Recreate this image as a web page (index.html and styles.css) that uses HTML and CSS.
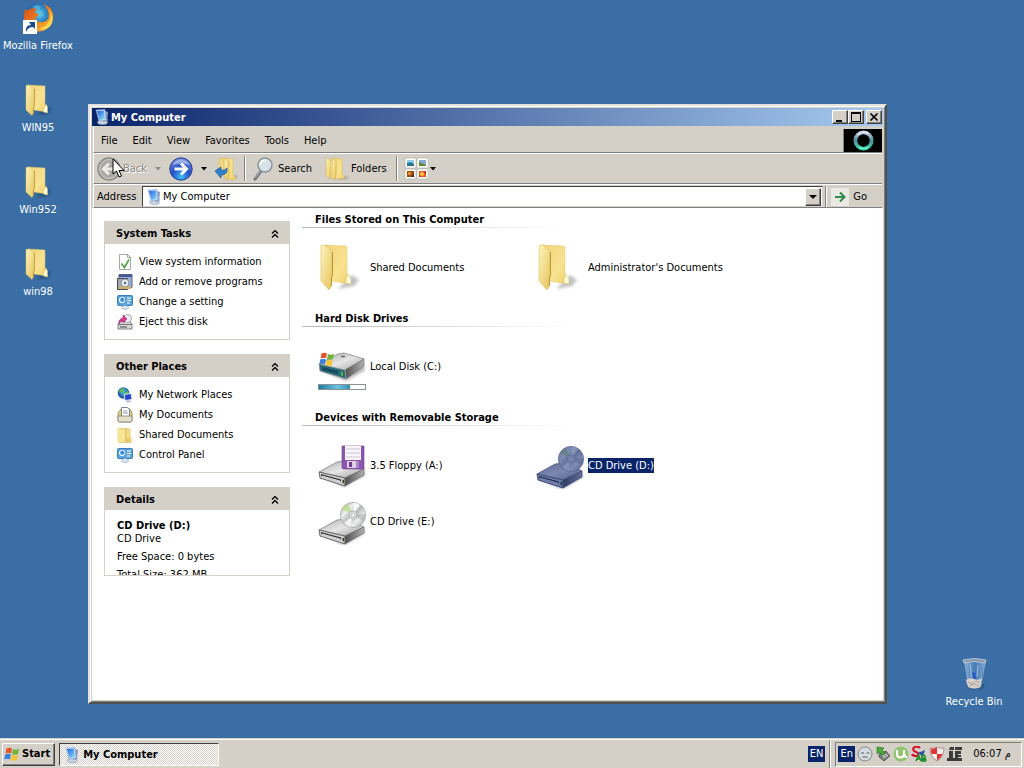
FILE: index.html
```
<!DOCTYPE html>
<html lang="en">
<head>
  <meta charset="UTF-8">
  <meta name="viewport" content="width=device-width, initial-scale=1.0">
  <title>My Computer</title>
  <link rel="stylesheet" href="styles.css">
</head>
<body>

  <!-- Shared icons -->
  <svg class="icon-defs" aria-hidden="true">
    <defs>
      <linearGradient id="gFlap" x1="0" y1="0" x2="1" y2="1">
        <stop offset="0" stop-color="#fdf5bd"/><stop offset="1" stop-color="#e6c45c"/>
      </linearGradient>
      <linearGradient id="gBack" x1="0" y1="0" x2="1" y2="1">
        <stop offset="0" stop-color="#f0d27a"/><stop offset=".6" stop-color="#f8e391"/><stop offset="1" stop-color="#f0cf68"/>
      </linearGradient>
      <linearGradient id="gTop" x1="0" y1="0" x2="1" y2="1">
        <stop offset="0" stop-color="#a8a8a8"/><stop offset=".5" stop-color="#e6e6e6"/><stop offset="1" stop-color="#9c9c9c"/>
      </linearGradient>
      <linearGradient id="gSide" x1="0" y1="0" x2="1" y2="0">
        <stop offset="0" stop-color="#505050"/><stop offset="1" stop-color="#b0b0b0"/>
      </linearGradient>
      <linearGradient id="gDisc" x1="0" y1="0" x2="1" y2="1">
        <stop offset="0" stop-color="#a0a6a4"/><stop offset=".3" stop-color="#eceeec"/><stop offset=".5" stop-color="#b4b9b7"/><stop offset=".7" stop-color="#eeeeee"/><stop offset="1" stop-color="#939795"/>
      </linearGradient>
      <linearGradient id="gBar" x1="0" y1="0" x2="1" y2="0">
        <stop offset="0" stop-color="#1e7ba4"/><stop offset=".6" stop-color="#6fc4de"/><stop offset="1" stop-color="#2f8fb4"/>
      </linearGradient>
      <linearGradient id="gScreen" x1="0" y1="0" x2="1" y2="1">
        <stop offset="0" stop-color="#1d62d8"/><stop offset="1" stop-color="#8fe0fb"/>
      </linearGradient>
      <linearGradient id="gRing" x1="0" y1="0" x2="0" y2="1">
        <stop offset="0" stop-color="#c3cce4"/><stop offset=".5" stop-color="#4d8e9c"/><stop offset="1" stop-color="#35d3a8"/>
      </linearGradient>
      <linearGradient id="gGlass" x1="0" y1="0" x2="1" y2="0">
        <stop offset="0" stop-color="#b9d3ec"/><stop offset=".5" stop-color="#4f83bd"/><stop offset="1" stop-color="#a8c6e4"/>
      </linearGradient>
      <radialGradient id="gBlue" cx=".5" cy=".85" r=".8">
        <stop offset="0" stop-color="#3fc0f8"/><stop offset=".5" stop-color="#2350c8"/><stop offset="1" stop-color="#6d86d8"/>
      </radialGradient>
      <radialGradient id="gGlobe" cx=".5" cy=".4" r=".6">
        <stop offset="0" stop-color="#4cc3ee"/><stop offset="1" stop-color="#143f8c"/>
      </radialGradient>
      <linearGradient id="gFox" x1="0" y1="0" x2="1" y2="1">
        <stop offset="0" stop-color="#d4451a"/><stop offset=".6" stop-color="#f08a1c"/><stop offset="1" stop-color="#fbd34a"/>
      </linearGradient>
      <filter id="selectedTint" color-interpolation-filters="sRGB">
        <feColorMatrix values=".5 0 0 0 .03  0 .5 0 0 .08  0 0 .5 0 .24  0 0 0 1 0"/>
      </filter>
      <filter id="soft"><feGaussianBlur stdDeviation="1.5"/></filter>
    </defs>

    <symbol id="folder" viewBox="0 0 48 48">
      <path d="M20 46L34 32l7 5-5 6z" fill="#777" opacity=".45" filter="url(#soft)"/>
      <path d="M7 2l21 1 1 1v33l3 2v2l-18-3z" fill="url(#gBack)" stroke="#e3c66c" stroke-width=".5"/>
      <path d="M30 31l3 5v5l-5-1v-4z" fill="#fffbe0" stroke="#d5bb60" stroke-width=".5"/>
      <path d="M3 2.500l4-.5 6 5 1 2v24l-1 3v8l-2 3-8-9z" fill="url(#gFlap)" stroke="#d9bf66" stroke-width=".6"/>
      <path d="M14.500 9v23l-1 3v8" fill="none" stroke="#bd9936" stroke-width="1"/>
    </symbol>

    <!-- Same folder, sitting in the middle of a desktop icon -->
    <symbol id="folder-desktop" viewBox="0 0 32 32">
      <path d="M14 31l10-9 5 3-4 5z" fill="#123" opacity=".4" filter="url(#soft)"/>
      <path d="M6 1l17 1v24l2 1v1l-13-2z" fill="url(#gBack)" stroke="#e3c66c" stroke-width=".5"/>
      <path d="M24 20l1.500 3v6l-4-1v-3z" fill="#fffbe0" stroke="#d5bb60" stroke-width=".5"/>
      <path d="M4 1.500L7 1l5 3.500v18l-1 2v5L10 31.500 4 26z" fill="url(#gFlap)" stroke="#d9bf66" stroke-width=".5"/>
      <path d="M12.500 5v17.500l-1 2v5" fill="none" stroke="#bd9936" stroke-width=".8"/>
    </symbol>

    <symbol id="monitor" viewBox="0 0 16 16">
      <path d="M3 12l6 3 4-2 1-3z" fill="#aeb9cf"/>
      <ellipse cx="8.500" cy="13.500" rx="5" ry="2" fill="#ccd5e4" stroke="#8793ae" stroke-width=".6"/>
      <path d="M11 2l3 1-1 9-4 1z" fill="#8698bd"/>
      <path d="M2 1l9-.5 1 10.500-7 1z" fill="#cfe2fa" stroke="#8ba7d6" stroke-width=".6"/>
      <path d="M3 2l7-.5.8 8.500-5.300 1z" fill="url(#gScreen)"/>
    </symbol>

    <symbol id="drive" viewBox="0 0 48 48">
      <path d="M4 37l22 10 21-12-2-5z" fill="#555" opacity=".45" filter="url(#soft)"/>
      <path d="M1 32l18-10 10-1 17 8-19 9z" fill="url(#gTop)" stroke="#858585" stroke-width=".8"/>
      <path d="M1 32l26 6v8L2 38z" fill="#d0d0d0" stroke="#5d5d5d" stroke-width=".9"/>
      <path d="M27 38l19-9v6L27 46z" fill="url(#gSide)" stroke="#6b6b6b" stroke-width=".7"/>
      <path d="M3 34l20 5.500v2L3 36z" fill="#333"/>
      <path d="M4 36l18 5" stroke="#fff" stroke-width=".8"/>
      <path d="M24.500 39.500l1.500.4v3.600l-1.500-.4z" fill="#2f4a22"/>
    </symbol>

    <symbol id="disc" viewBox="0 0 48 48">
      <circle cx="35" cy="18" r="12.600" fill="url(#gDisc)" stroke="#a2a6a4" stroke-width=".8"/>
      <path d="M35 18L24 12a12 12 0 0 1 6-5z" fill="#b6dd7c" opacity=".7"/>
      <path d="M35 18l1-12a12 12 0 0 1 6 2z" fill="#fff" opacity=".8"/>
      <path d="M35 18l-3 12a12 12 0 0 1-6-4z" fill="#fff" opacity=".8"/>
      <path d="M35 18l12-1a12 12 0 0 1-2 7z" fill="#777" opacity=".3"/>
      <circle cx="35" cy="18" r="4" fill="#dedede" stroke="#a0a0a0" stroke-width=".6"/>
      <circle cx="35" cy="18" r="1.700" fill="#fff" stroke="#999" stroke-width=".5"/>
    </symbol>

    <symbol id="flag" viewBox="0 0 16 16">
      <path d="M2.500 2.500q3-1.700 5.500 0L7 7.500q-2.500-1.500-5.500 0z" fill="#e0562a"/>
      <path d="M9 3q3 1.500 6-.3L14 8q-3 1.500-6 0z" fill="#72b238"/>
      <path d="M1.300 8.500q3-1.500 5.500 0l-1 5q-2.500-1.500-5.500 0z" fill="#3a7fdc"/>
      <path d="M7.800 9q3 1.500 6 0l-1 5q-3 1.500-6 0z" fill="#f6c22d"/>
    </symbol>

    <symbol id="chevrons" viewBox="0 0 8 8">
      <path d="M1 3.500l3-3 3 3M1 7.500l3-3 3 3" fill="none" stroke="#000" stroke-width="1.300"/>
    </symbol>

    <symbol id="caret" viewBox="0 0 6 4">
      <path d="M0 0h6L3 3.500z" fill="currentColor"/>
    </symbol>

    <symbol id="settings" viewBox="0 0 16 16">
      <rect x=".5" y="1.500" width="15" height="10" rx="1" fill="#5ba3dc" stroke="#3a80bc"/>
      <circle cx="5" cy="6" r="2.700" fill="#55aef0" stroke="#fff"/>
      <path d="M5 6V3.500M5 6h2.500" stroke="#1c5da8"/>
      <path d="M10 4h4M10 6.500h4M10 9h3" stroke="#fff"/>
      <ellipse cx="8" cy="13.500" rx="3.500" ry="2" fill="#e0e8f0" stroke="#86a0ba" stroke-width=".6"/>
    </symbol>
  </svg>

  <main class="desktop">

    <!-- Desktop shortcuts -->
    <nav class="shortcuts">
      <a class="shortcut" href="#">
        <svg viewBox="0 0 32 32">
          <circle cx="17" cy="15" r="14" fill="url(#gGlobe)"/>
          <path d="M12 4q4-2 7 1l-2 3 4 1 1 4-4 3-5-2-3-4z" fill="#66cbea" opacity=".5"/>
          <path d="M3 7q1 2 3 1 4-3 9-1-3 2-2 4 3 0 4 2l-4 3q1 4 5 4 5 1 8-3 2-5-1-10-1-3-4-5 8 2 10 10 1 9-5 14-6 5-14 3Q1 25 2 15q0-5 1-8z" fill="url(#gFox)"/>
          <path d="M26 7q5 7 1 13-4 6-10 6 6 4 12-3 4-8-3-16z" fill="#fbd850"/>
          <rect x="1" y="18" width="14" height="14" fill="#fff"/>
          <path d="M4 30q-1-7 5-7l-2-3h6v7l-2-2q-5 0-7 5z" fill="#1d4a86"/>
        </svg>
        <span>Mozilla Firefox</span>
      </a>
      <a class="shortcut" href="#"><svg viewBox="0 0 32 32"><use href="#folder-desktop"/></svg><span>WIN95</span></a>
      <a class="shortcut" href="#"><svg viewBox="0 0 32 32"><use href="#folder-desktop"/></svg><span>Win952</span></a>
      <a class="shortcut" href="#"><svg viewBox="0 0 32 32"><use href="#folder-desktop"/></svg><span>win98</span></a>
    </nav>

    <a class="shortcut recycle-bin" href="#">
      <svg viewBox="0 0 32 32">
        <path d="M8 28l5 4 12-1 2-5z" fill="#123" opacity=".25"/>
        <path d="M6 3l4 26q6 3 13 0l5-26z" fill="url(#gGlass)" opacity=".65"/>
        <path d="M8 22q4-3 8-1t8-1l-1.500 9q-6 3-12.500 0z" fill="#d8d0ca"/>
        <path d="M10 24l5 2 3-3 4 2M11 28l5-2 5 2" fill="none" stroke="#a0948e" stroke-width=".8"/>
        <path d="M14 15l3 1-2 3 3 1" fill="none" stroke="#2258c0" stroke-width="2"/>
        <path d="M12 6l2 14M20 7l-1 12" stroke="#c5dbf0" opacity=".6"/>
        <path d="M5 2q12-3 23 0l-1 3q-11-3-21 0z" fill="#8795a6" stroke="#cad6e3" stroke-width=".8"/>
      </svg>
      <span>Recycle Bin</span>
    </a>

    <!-- Explorer window -->
    <section class="window">
      <header class="title-bar">
        <svg class="icon-16" viewBox="0 0 16 16"><use href="#monitor"/></svg>
        <h1>My Computer</h1>
        <div class="window-buttons">
          <button type="button" aria-label="Minimize"><svg viewBox="0 0 12 10"><path d="M2 8h6v2H2z"/></svg></button>
          <button type="button" aria-label="Maximize"><svg viewBox="0 0 12 10"><path d="M1 0h10v10H1zM2 2v7h8V2z" fill-rule="evenodd"/></svg></button>
          <button type="button" class="close" aria-label="Close"><svg viewBox="0 0 12 10"><path d="M2.500 1.500l7 7M9.500 1.500l-7 7" stroke="#000" stroke-width="1.700"/></svg></button>
        </div>
      </header>

      <div class="menu-row">
        <nav class="menu-bar">
          <button type="button">File</button>
          <button type="button">Edit</button>
          <button type="button">View</button>
          <button type="button">Favorites</button>
          <button type="button">Tools</button>
          <button type="button">Help</button>
        </nav>
        <div class="throbber">
          <svg viewBox="0 0 24 24">
            <circle cx="12" cy="12" r="8.500" fill="none" stroke="url(#gRing)" stroke-width="4"/>
            <path d="M6 6q5-5 11-1" fill="none" stroke="#f1f4ff" stroke-width="1.500" opacity=".8"/>
            <path d="M7 19q5 3 10 0" fill="none" stroke="#7cf8d4" stroke-width="1.500" opacity=".8"/>
          </svg>
        </div>
      </div>

      <div class="toolbar">
        <button type="button" class="tool back" disabled>
          <svg class="icon-24" viewBox="0 0 24 24">
            <circle cx="12" cy="12" r="11" fill="#a9a8a4" stroke="#8d8c88" stroke-width="1.500"/>
            <circle cx="12" cy="12" r="9.500" fill="none" stroke="#d2d0ca"/>
            <path d="M18 12H7M12 6.500L6.500 12l5.500 5.500" fill="none" stroke="#eceae4" stroke-width="3"/>
          </svg>
          Back
          <svg class="caret" viewBox="0 0 6 4"><use href="#caret"/></svg>
        </button>
        <button type="button" class="tool forward" aria-label="Forward">
          <svg class="icon-24" viewBox="0 0 24 24">
            <circle cx="12" cy="12" r="11.200" fill="url(#gBlue)" stroke="#27408e"/>
            <path d="M3.500 8Q6 2.500 12 2.500T20.500 8Q12 5 3.500 8z" fill="#fff" opacity=".4"/>
            <path d="M5.500 12h11M12 6.500l5.500 5.500-5.500 5.500" fill="none" stroke="#fff" stroke-width="3"/>
          </svg>
          <svg class="caret" viewBox="0 0 6 4"><use href="#caret"/></svg>
        </button>
        <button type="button" class="tool up" aria-label="Up">
          <svg class="icon-24" viewBox="0 0 24 24">
            <path d="M15 23l7-6 2 3-4 3z" fill="#777" opacity=".3"/>
            <path d="M5 2l6-1 8 1v16l2 2v3l-8-1-4-3-4-4z" fill="url(#gBack)" stroke="#dfbd5d" stroke-width=".6"/>
            <path d="M11 1l4 4v14l-2 4-3-4V3z" fill="url(#gFlap)" stroke="#c9a443" stroke-width=".6"/>
            <path d="M1 14l6-4v3q4 1 6-2 1 7-6 7v3z" fill="#2f7fd0" stroke="#1a559c" stroke-width=".7"/>
          </svg>
        </button>
        <span class="separator"></span>
        <button type="button" class="tool search">
          <svg class="icon-24" viewBox="0 0 24 24">
            <path d="M9 14l-6 8" stroke="#6d757c" stroke-width="3" stroke-linecap="round"/>
            <path d="M8.500 14L3 21" stroke="#b8c0c8" stroke-width="1"/>
            <circle cx="13" cy="8" r="7" fill="#d9e2e6" stroke="#8b9498" stroke-width="1.500"/>
            <path d="M8.500 8q0-4.500 5-5" fill="none" stroke="#fff" stroke-width="1.600"/>
          </svg>
          Search
        </button>
        <button type="button" class="tool folders">
          <svg class="icon-24" viewBox="0 0 24 24">
            <path d="M12 23l9-5 3 3-3 2z" fill="#777" opacity=".3"/>
            <path d="M8 1l9 1v15l2 2v3l-9-1z" fill="url(#gBack)" stroke="#dfbd5d" stroke-width=".6"/>
            <path d="M7 1l4 3v15l-1 4-3-3z" fill="url(#gFlap)" stroke="#cfae50" stroke-width=".6"/>
            <path d="M1 2l2-1 3 3v15l-1 3-4-4z" fill="url(#gFlap)" stroke="#cfae50" stroke-width=".6"/>
            <path d="M6 4h2v16H6z" fill="#efd377"/>
          </svg>
          Folders
        </button>
        <span class="separator"></span>
        <button type="button" class="tool views" aria-label="Views">
          <svg class="icon-24" viewBox="0 0 24 24">
            <path d="M1 1h11v10H1zM13 1h11v10H13zM1 12h11v10H1zM13 12h11v10H13z" fill="#fff" stroke="#aaa8a0" stroke-width=".6"/>
            <path d="M3 3h7v6H3z" fill="#8dcde8"/><path d="M3 6q4-2 7 1v2H3z" fill="#27758c"/>
            <path d="M15 3h7v6h-7z" fill="#86a8d8"/><path d="M15 9V5l7 3v1z" fill="#5d8c2c"/>
            <path d="M3 14h7v6H3z" fill="#a24e13"/><circle cx="5.500" cy="16.500" r="1.500" fill="#e4a02c"/><path d="M7 20l3-4v4z" fill="#4c2410"/>
            <path d="M15 14h7v6h-7z" fill="#e05a28"/><circle cx="18" cy="17" r="2" fill="#f8c43c"/><path d="M15 18l2 2h-2zM20 14h2v3z" fill="#b81f22"/>
          </svg>
          <svg class="caret" viewBox="0 0 6 4"><use href="#caret"/></svg>
        </button>
      </div>

      <form class="address-bar">
        <label for="address">Address</label>
        <div class="address-field">
          <svg class="icon-16" viewBox="0 0 16 16"><use href="#monitor"/></svg>
          <input type="text" id="address" value="My Computer">
          <button type="button" class="address-drop" aria-label="Show addresses"><svg viewBox="0 0 8 4"><path d="M0 0h8L4 4z"/></svg></button>
        </div>
        <span class="separator"></span>
        <button type="button" class="go">
          <span class="go-icon"><svg viewBox="0 0 18 18"><path d="M4 9h9M9 4.500L13.500 9 9 13.500" fill="none" stroke="#318a4c" stroke-width="2"/></svg></span>
          Go
        </button>
      </form>

      <div class="content">
        <aside class="side-pane">
          <section class="panel">
            <h2><button type="button">System Tasks<svg viewBox="0 0 8 8"><use href="#chevrons"/></svg></button></h2>
            <ul>
              <li><a href="#">
                <svg class="icon-16" viewBox="0 0 16 16"><path d="M2.500.5h8l3 3v12h-11z" fill="#fff" stroke="#a3aaa3"/><path d="M10.500.5v3h3" fill="none" stroke="#a3aaa3"/><path d="M4.500 9.500l3 4 4.500-8" fill="none" stroke="#4ba043" stroke-width="1.600"/></svg>
                View system information</a></li>
              <li><a href="#">
                <svg class="icon-16" viewBox="0 0 16 16"><path d="M2 .5h13v13H2z" fill="#9fb0d4" stroke="#5a6480"/><path d="M2 1h13v2H2z" fill="#41599c"/><path d="M.5 4.500h10v11H.5z" fill="#a5a8b2" stroke="#474a54"/><circle cx="8" cy="9" r="4" fill="#e4e9ee" stroke="#8a93a0"/><circle cx="8" cy="9" r="1.200" fill="#668"/><path d="M2 12.500h12V15H2z" fill="#c9b26c"/></svg>
                Add or remove programs</a></li>
              <li><a href="#"><svg class="icon-16" viewBox="0 0 16 16"><use href="#settings"/></svg>Change a setting</a></li>
              <li><a href="#">
                <svg class="icon-16" viewBox="0 0 16 16"><path d="M1 10l3-3h8l3 3v5H1z" fill="#d8d8d8" stroke="#6a6a6a" stroke-width=".8"/><path d="M1 10.500h14" stroke="#777"/><path d="M3 13h7" stroke="#444"/><circle cx="10.500" cy="4.500" r="4" fill="#eee" stroke="#888" stroke-width=".7"/><path d="M2 10q-1-5 4-6V1l4 4-4 4V7Q3 7 2 10z" fill="#d33a8c" stroke="#9c1f62" stroke-width=".5"/></svg>
                Eject this disk</a></li>
            </ul>
          </section>

          <section class="panel">
            <h2><button type="button">Other Places<svg viewBox="0 0 8 8"><use href="#chevrons"/></svg></button></h2>
            <ul>
              <li><a href="#">
                <svg class="icon-16" viewBox="0 0 16 16"><circle cx="6.500" cy="6" r="5.800" fill="url(#gGlobe)"/><path d="M2 4q3-4 6-2l-2 3-3 1zM7 6l4-2 1 3-3 3z" fill="#5dbb52"/><path d="M7 7.500l7-1 1 6-7 1z" fill="#2449c8" stroke="#dce6f8"/><path d="M9 14l4-.5 1 1.500-4 .5z" fill="#a8b4cc"/></svg>
                My Network Places</a></li>
              <li><a href="#">
                <svg class="icon-16" viewBox="0 0 16 16"><path d="M1 6l3-4h9l2 4v8l-1 1H2l-1-1z" fill="#e8cf70" stroke="#90835a" stroke-width=".8"/><path d="M4.500.5h6l2 2v8h-8z" fill="#fff" stroke="#7b8494"/><path d="M6 4h4M6 6h5" stroke="#8fa0bc"/><path d="M1 9h14v5l-1 1H2l-1-1z" fill="#e4dfca" stroke="#85806a" stroke-width=".8"/></svg>
                My Documents</a></li>
              <li><a href="#">
                <svg class="icon-16" viewBox="0 0 16 16"><path d="M1 1.500h7l5 .5v8l1 1v4.500H2l-1-1z" fill="url(#gBack)" stroke="#dbbd5e" stroke-width=".7"/><path d="M1 1.500l8 .5v13l-8-.5z" fill="#f7e594"/><path d="M9 2v13M11 11v4" stroke="#d0a946" stroke-width=".8"/></svg>
                Shared Documents</a></li>
              <li><a href="#"><svg class="icon-16" viewBox="0 0 16 16"><use href="#settings"/></svg>Control Panel</a></li>
            </ul>
          </section>

          <section class="panel details">
            <h2><button type="button">Details<svg viewBox="0 0 8 8"><use href="#chevrons"/></svg></button></h2>
            <div class="details-body">
              <p><strong>CD Drive (D:)</strong><br>CD Drive</p>
              <p>Free Space: 0 bytes</p>
              <p>Total Size: 362 MB</p>
            </div>
          </section>
        </aside>

        <div class="file-pane">
          <section class="group">
            <h2>Files Stored on This Computer</h2>
            <div class="items">
              <a class="item" href="#"><svg viewBox="0 0 48 48"><use href="#folder"/></svg><span>Shared Documents</span></a>
              <a class="item" href="#"><svg viewBox="0 0 48 48"><use href="#folder"/></svg><span>Administrator's Documents</span></a>
            </div>
          </section>

          <section class="group">
            <h2>Hard Disk Drives</h2>
            <div class="items">
              <a class="item" href="#">
                <svg viewBox="0 0 48 48">
                  <path d="M4 29l24 10 19-11-2-6z" fill="#555" opacity=".45" filter="url(#soft)"/>
                  <path d="M1 22l19-10 6-1 20 6-19 12z" fill="url(#gTop)" stroke="#858585" stroke-width=".8"/>
                  <path d="M27 28l19-11v7L28 37z" fill="url(#gSide)" stroke="#747474" stroke-width=".7"/>
                  <path d="M1 22l26 6 1 9-26-8z" fill="#286a76" stroke="#999" stroke-width=".9"/>
                  <path d="M4 25l16 4v3L4 28z" fill="#154a63"/><path d="M23 29.500l2 .5v4l-2-.5z" fill="#58b34e"/>
                  <ellipse cx="25" cy="14.500" rx="2.500" ry="1" fill="#777"/>
                  <use href="#flag" x="1" y="9" width="16" height="16"/>
                  <rect x=".5" y="42.500" width="47" height="5" fill="#fff" stroke="#8b9296"/>
                  <rect x="1" y="43" width="31" height="4" fill="url(#gBar)"/>
                </svg>
                <span>Local Disk (C:)</span>
              </a>
            </div>
          </section>

          <section class="group">
            <h2>Devices with Removable Storage</h2>
            <div class="items">
              <a class="item" href="#">
                <svg viewBox="0 0 48 48">
                  <use href="#drive" y="-1"/>
                  <path d="M24 5h22v23H25l-1-1z" fill="#8b55b0" stroke="#6d3c92" stroke-width=".6"/>
                  <path d="M27 5h16v14H27z" fill="#f8f6fa"/><path d="M28 8h14M28 12h14M28 16h14" stroke="#cbc2d6"/>
                  <path d="M29 20h12v7H29z" fill="#dcd4e6"/><path d="M31 21h3v5h-3z" fill="#713a98"/><path d="M38 20h3v7h-3z" fill="#a986c4"/>
                </svg>
                <span>3.5 Floppy (A:)</span>
              </a>
              <a class="item selected" href="#"><svg viewBox="0 0 48 48"><use href="#drive" y="1"/><use href="#disc"/></svg><span>CD Drive (D:)</span></a>
              <a class="item" href="#"><svg viewBox="0 0 48 48"><use href="#drive" y="1"/><use href="#disc"/></svg><span>CD Drive (E:)</span></a>
            </div>
          </section>
        </div>
      </div>
    </section>

    <!-- Mouse pointer -->
    <svg class="pointer" viewBox="0 0 13 20" aria-hidden="true"><path d="M1 1v15l3.500-3 2.500 6 2.500-1L7 12.500h5z" fill="#fff" stroke="#000"/></svg>
  </main>

  <footer class="taskbar">
    <button type="button" class="start"><svg class="icon-16" viewBox="0 0 16 16"><use href="#flag"/></svg>Start</button>
    <button type="button" class="task"><svg class="icon-16" viewBox="0 0 16 16"><use href="#monitor"/></svg>My Computer</button>
    <button type="button" class="language">EN</button>
    <span class="separator"></span>
    <div class="tray">
      <button type="button" class="language">En</button>
      <svg class="icon-16" viewBox="0 0 16 16"><circle cx="8" cy="8" r="7" fill="#d4dcdf" stroke="#80898d"/><path d="M4 7h3M9.500 7h3M5.500 11h5" stroke="#59636a" stroke-width="1.200"/></svg>
      <svg class="icon-16" viewBox="0 0 16 16"><path d="M4 8l7-3 4 5-6 5-5-4z" fill="#777c76" stroke="#444" stroke-width=".7"/><path d="M7 10l5-2M8 12l5-2.500" stroke="#dedede"/><path d="M2 1l7 1-2 2 3 3-3 2-3-3-2 2z" fill="#48ad38" stroke="#206a19" stroke-width=".6"/></svg>
      <svg class="icon-16" viewBox="0 0 16 16"><circle cx="8" cy="8" r="7.500" fill="#8fc46a"/><path d="M4 4v4q0 3.500 3.500 3.500T11 8V4M11 7q0 4 3 4" fill="none" stroke="#fff" stroke-width="2.200"/></svg>
      <svg class="icon-16" viewBox="0 0 16 16"><path d="M9 2Q7 0 4 1T3 5l4 2q1 3-2 3T1 8" fill="none" stroke="#d8142c" stroke-width="2.200"/><path d="M7 7l7-3-2 7z" fill="#2b55a8"/><path d="M5 15l2.500-6L10 15M6 13h3M11 15V9q4 0 3 3t-3 0q5 0 3.500 3z" fill="none" stroke="#138b22" stroke-width="1.400"/></svg>
      <svg class="icon-16" viewBox="0 0 16 16"><path d="M1 2q4 1 7-1 3 2 7 1 0 9-7 13Q1 11 1 2z" fill="#f7eeee" stroke="#b08c8c"/><path d="M2 2.500q3 .5 6-1V8H2.500q-.5-2-.5-5.500zM8 8h5.500Q12 12 8 14.500z" fill="#dc3534"/></svg>
      <svg class="icon-16" viewBox="0 0 16 16"><path d="M3 1h4v3H2zM8 1h7v3H8zM2 5h4v7h2v3H0v-3h2zM8 5h6v3h-3v1h3v2h-3v1h4v3H8z" fill="#3b3b3b"/></svg>
      <time>06:07 م</time>
    </div>
  </footer>

</body>
</html>
```
FILE: styles.css
```
/* Reset default styles */
* {
  margin: 0;
  padding: 0;
  box-sizing: border-box;
}

body {
  display: flex;
  flex-direction: column;
  height: 100vh;
  overflow: hidden;
  background: #3a6ea5;
  color: #000;
  font-family: "DejaVu Sans Condensed", "DejaVu Sans", sans-serif;
  font-size: 11px;
  line-height: 14px;
}

button,
input {
  font: inherit;
  color: inherit;
  background: none;
  border: none;
}

a {
  color: inherit;
  text-decoration: none;
}

ul {
  list-style: none;
}

svg {
  display: block;
  flex: none;
}

.icon-defs {
  position: absolute;
  width: 0;
  height: 0;
}

.icon-16 {
  width: 16px;
  height: 16px;
}

.icon-24 {
  width: 24px;
  height: 24px;
}

.caret {
  width: 6px;
  height: 4px;
}

.separator {
  align-self: stretch;
  width: 2px;
  border-left: 1px solid #808080;
  border-right: 1px solid #fff;
}

/* Desktop */
.desktop {
  position: relative;
  flex: 1;
  min-height: 0;
}

.shortcuts {
  display: flex;
  flex-direction: column;
  gap: 31px;
  width: 76px;
  padding-top: 2px;
}

.shortcut {
  display: flex;
  flex-direction: column;
  align-items: center;
  gap: 5px;
  color: #fff;
  white-space: nowrap;
}

.shortcut svg {
  width: 32px;
  height: 32px;
}

.recycle-bin {
  position: absolute;
  right: 12px;
  bottom: 29px;
  width: 76px;
}

.pointer {
  position: absolute;
  left: 112px;
  top: 158px;
  width: 13px;
  height: 20px;
}

/* Window */
.window {
  position: absolute;
  inset: 104px 137px 34px 88px;
  display: flex;
  flex-direction: column;
  padding: 2px;
  background: #d4d0c8;
  border: 2px solid;
  border-color: #e4e2dc #505050 #505050 #e4e2dc;
  box-shadow: inset 1px 1px #fff, inset -1px -1px #808080;
}

.title-bar {
  display: flex;
  align-items: center;
  gap: 1px;
  height: 18px;
  padding: 0 1px 0 2px;
  background: linear-gradient(to right, #0a246a, #a6caf0);
  color: #fff;
}

.title-bar h1 {
  flex: 1;
  padding-top: 1px;
  font-size: 11px;
}

.window-buttons {
  display: flex;
}

.window-buttons button,
.address-drop {
  display: flex;
  align-items: center;
  justify-content: center;
  width: 16px;
  height: 14px;
  background: #d4d0c8;
  border: 1px solid;
  border-color: #fff #404040 #404040 #fff;
  box-shadow: inset -1px -1px #808080;
}

.window-buttons svg {
  width: 12px;
  height: 10px;
}

.window-buttons .close {
  margin-left: 2px;
}

/* Bars under the title */
.menu-row,
.toolbar,
.address-bar {
  margin: 0 1px;
  border-left: 1px solid #fff;
  border-bottom: 1px solid #808080;
}

.menu-row {
  display: flex;
  height: 27px;
  padding-top: 3px;
}

.menu-bar {
  display: flex;
  flex: 1;
  gap: 1px;
  align-items: center;
  border-right: 1px solid #808080;
}

.menu-bar button {
  padding: 0 7px;
}

.throbber {
  display: flex;
  justify-content: center;
  align-items: center;
  width: 38px;
  background: #000;
}

.throbber svg {
  width: 23px;
  height: 23px;
}

/* Toolbar */
.toolbar {
  display: flex;
  align-items: center;
  height: 31px;
  padding: 2px 3px;
  border-top: 1px solid #fff;
}

.tool {
  display: flex;
  align-items: center;
  gap: 2px;
}

.back {
  color: #8c8a84;
  text-shadow: 1px 1px #fff;
}

.back .caret {
  margin-left: 6px;
}

.forward {
  gap: 8px;
  margin: 0 7px 0 8px;
}

.toolbar .separator {
  margin: 0 6px;
}

.folders {
  margin: 0 3px 0 13px;
}

/* Address */
.address-bar {
  display: flex;
  align-items: center;
  height: 24px;
  padding: 1px 3px 0;
  border-top: 1px solid #fff;
}

.address-bar label {
  width: 45px;
}

.address-field {
  display: flex;
  flex: 1;
  align-items: center;
  height: 21px;
  padding: 1px 1px 1px 3px;
  background: #fff;
  border: 1px solid;
  border-color: #404040 #d4d0c8 #d4d0c8 #404040;
}

.address-field input {
  flex: 1;
  min-width: 0;
  padding: 1px 0 0 1px;
  outline: none;
}

.address-drop {
  height: 18px;
}

.address-drop svg {
  width: 8px;
  height: 4px;
}

.address-bar .separator {
  margin: 0 4px 0 2px;
}

.go {
  display: flex;
  align-items: center;
  gap: 4px;
  padding-right: 12px;
}

.go-icon {
  background: #ebe9e4;
}

.go-icon svg {
  width: 18px;
  height: 18px;
}

/* Content */
.content {
  display: flex;
  flex: 1;
  min-height: 0;
  background: #fff;
}

.side-pane {
  display: flex;
  flex-direction: column;
  gap: 14px;
  width: 198px;
  padding: 13px 0 0 12px;
}

.panel {
  border: 1px solid #d4d0c8;
}

.panel h2 {
  font-size: 11px;
  background: #d4d0c8;
}

.panel h2 button {
  display: flex;
  align-items: center;
  justify-content: space-between;
  width: 100%;
  height: 22px;
  padding: 2px 10px 0 11px;
}

.panel h2 svg {
  width: 8px;
  height: 8px;
}

.panel ul {
  padding: 8px 12px 7px;
}

.panel li a {
  display: flex;
  align-items: center;
  gap: 6px;
  height: 20px;
  white-space: nowrap;
}

.details {
  height: 89px;
  overflow: hidden;
}

.details-body {
  display: flex;
  flex-direction: column;
  gap: 5px;
  padding: 9px 12px;
  line-height: 13px;
}

.file-pane {
  flex: 1;
  padding-left: 12px;
}

.group h2 {
  height: 20px;
  padding: 5px 13px 0;
  background: linear-gradient(to right, #b4b4b4, #fff) bottom left / 270px 1px no-repeat;
  font-size: 11px;
}

.items {
  display: grid;
  grid-template-columns: repeat(auto-fill, 218px);
  padding: 11px 0 12px 16px;
}

.item {
  display: flex;
  align-items: center;
  gap: 4px;
  height: 56px;
  white-space: nowrap;
}

.item svg {
  width: 48px;
  height: 48px;
}

.item span {
  padding-top: 1px;
}

.selected svg {
  filter: url(#selectedTint);
}

.selected span {
  background: #0a246a;
  color: #fff;
}

/* Taskbar */
.taskbar {
  display: flex;
  align-items: center;
  gap: 4px;
  height: 30px;
  padding: 1px 2px 0;
  background: #d4d0c8;
  border-top: 1px solid #d4d0c8;
  box-shadow: inset 0 1px #fff;
}

.start,
.task {
  display: flex;
  align-items: center;
  height: 23px;
  border: 1px solid;
  font-weight: bold;
}

.start {
  gap: 2px;
  padding: 0 4px 0 1px;
  border-color: #fff #404040 #404040 #fff;
  box-shadow: inset -1px -1px #808080;
}

.task {
  gap: 3px;
  width: 160px;
  padding: 1px 0 0 4px;
  background: repeating-conic-gradient(#fff 0 25%, #d4d0c8 0 50%) 0 0 / 2px 2px;
  border-color: #404040 #fff #fff #404040;
}

.language {
  width: 17px;
  height: 16px;
  background: #0a246a;
  color: #fff;
  text-align: center;
}

.taskbar > .language {
  margin-left: auto;
}

.tray {
  display: flex;
  align-items: center;
  gap: 2px;
  height: 25px;
  padding: 0 10px 0 2px;
  border: 1px solid;
  border-color: #808080 #fff #fff #808080;
}

.tray time {
  margin-left: 8px;
}
```
